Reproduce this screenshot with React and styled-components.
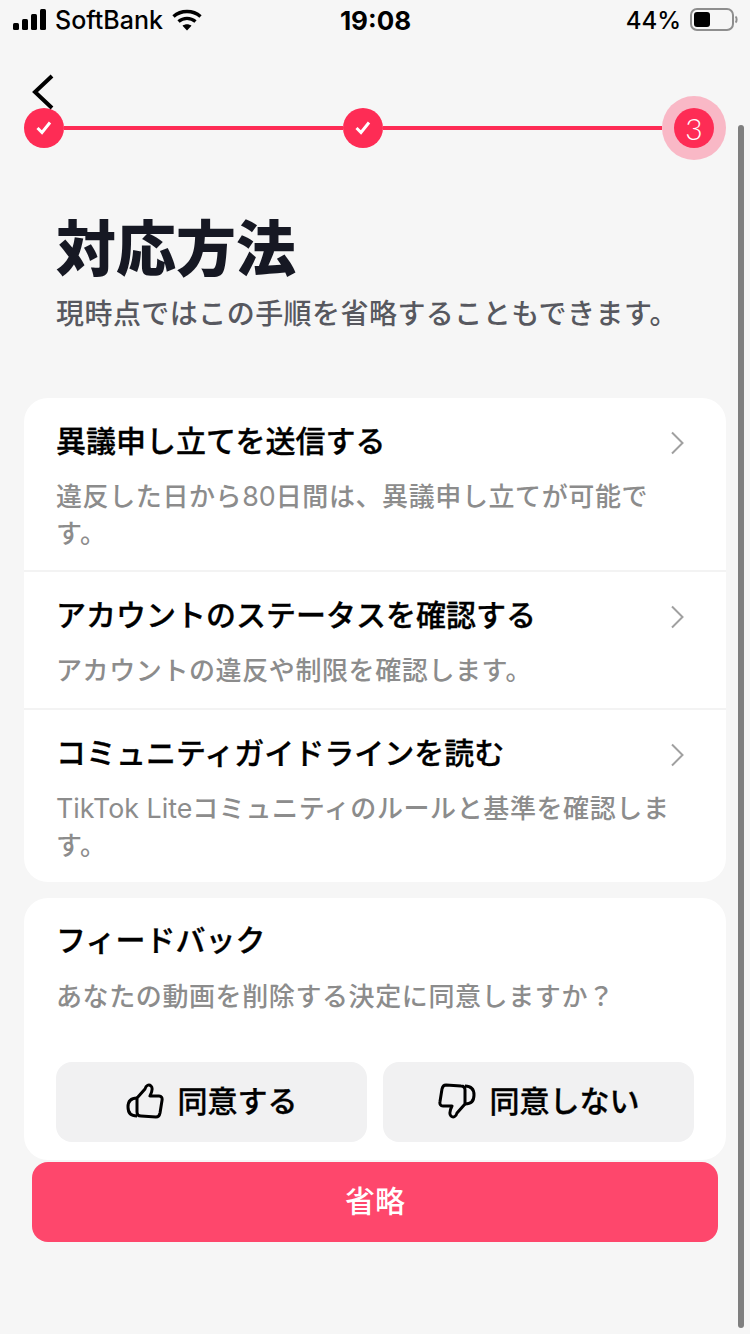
import React from 'react'
import styled, { createGlobalStyle } from 'styled-components'

const GlobalStyle = createGlobalStyle`
  html, body {
    margin: 0;
    padding: 0;
    background: #f6f6f6;
  }
  * {
    box-sizing: border-box;
  }
`

const Page = styled.div`
  position: relative;
  width: 750px;
  height: 1334px;
  overflow: hidden;
  background: #f6f6f6;
  font-family: "Noto Sans CJK JP", "Noto Sans", sans-serif;
  color: #000;
`

const StatusBar = styled.div`
  height: 40px;
  display: grid;
  grid-template-columns: 1fr auto 1fr;
  align-items: center;
  padding: 0 12px 0 13px;
  font-family: Inter, "Liberation Sans", sans-serif;
  font-size: 25px;
  font-weight: 500;
`

const StatusLeft = styled.div`
  display: flex;
  align-items: center;
  gap: 9px;
`

const StatusRight = styled.div`
  display: flex;
  align-items: center;
  justify-content: flex-end;
  gap: 9px;
  font-size: 24px;
`

const Clock = styled.div`
  font-weight: 700;
  font-size: 26px;
`

const BackButton = styled.div`
  position: absolute;
  left: 32px;
  top: 74px;
  line-height: 0;
`

const Stepper = styled.div`
  margin-top: 68px;
  padding: 0 24px;
  height: 40px;
  display: flex;
  align-items: center;
`

const Dot = styled.div`
  width: 40px;
  height: 40px;
  flex: none;
  margin: ${p => (p.$active ? '0 12px' : '0')};
  border-radius: 50%;
  background: #fe2c55;
  color: #fff;
  display: flex;
  align-items: center;
  justify-content: center;
  font-family: Lato, "Noto Sans", sans-serif;
  font-size: 30px;
  font-weight: 300;
  box-shadow: ${p => (p.$active ? '0 0 0 12px #f9b8c6' : 'none')};
`

const Line = styled.div`
  flex: 1;
  height: 4px;
  background: #fe2c55;
`

const Heading = styled.div`
  padding: 62px 33px 0 56px;
`

const Title = styled.h1`
  margin: 0;
  font-size: 60px;
  line-height: 70px;
  font-weight: 900;
  color: #161823;
`

const Subtitle = styled.p`
  margin: 12px 0 0;
  font-size: 28px;
  line-height: 40px;
  font-weight: 500;
  letter-spacing: 0.45px;
  color: #57585f;
`

const Card = styled.div`
  margin: ${p => p.$top}px 24px 0;
  background: #fff;
  border-radius: 24px;
`

const RowTitle = styled.div`
  font-size: 30px;
  line-height: 42px;
  font-weight: 500;
  -webkit-text-stroke: 0.3px #000;
`

const RowText = styled.div`
  margin-top: 17px;
  padding-right: 24px;
  font-size: 26px;
  line-height: 37px;
  letter-spacing: 0.6px;
  color: #8c8c8c;
  font-weight: 500;
`

const Row = styled.div`
  position: relative;
  padding: 20px 32px ${p => p.$bottom}px;
  border-bottom: 2px solid #f3f3f3;
  &:last-child {
    border-bottom-color: transparent;
  }
  ${RowText} {
    margin-top: 16px;
  }
`

const Latin = styled.span`
  font-family: Inter, "Noto Sans", sans-serif;
  font-size: 26.8px;
  line-height: 1;
  letter-spacing: 0;
  font-weight: 400;
`

const Chevron = styled.div`
  position: absolute;
  right: 42px;
  top: 33px;
  line-height: 0;
`

const FeedbackCard = styled(Card)`
  height: 262px;
  padding: 19px 32px 0;
`

const VoteRow = styled.div`
  margin-top: 49px;
  display: grid;
  grid-template-columns: 1fr 1fr;
  gap: 16px;
`

const VoteButton = styled.div`
  height: 80px;
  padding-bottom: 6px;
  border-radius: 16px;
  background: #f1f1f2;
  display: flex;
  align-items: center;
  justify-content: center;
  gap: 14px;
  font-size: 30px;
  font-weight: 500;
  -webkit-text-stroke: 0.3px #000;
  svg {
    margin-top: 4px;
  }
`

const SkipButton = styled.div`
  margin: 2px 32px 0;
  height: 80px;
  padding-bottom: 6px;
  border-radius: 16px;
  background: #fe476c;
  color: #fff;
  display: flex;
  align-items: center;
  justify-content: center;
  font-size: 30px;
  font-weight: 500;
`

const ScrollThumb = styled.div`
  position: absolute;
  right: 6px;
  top: 125px;
  width: 6px;
  height: 1203px;
  border-radius: 3px;
  background: #7f7f7f;
`

const SignalIcon = () => (
  <svg width="33" height="22" viewBox="0 0 33 22">
    <rect x="0" y="14" width="6" height="7" rx="1.5" fill="#000" />
    <rect x="9" y="10" width="6" height="11" rx="1.5" fill="#000" />
    <rect x="18" y="5" width="6" height="16" rx="1.5" fill="#000" />
    <rect x="27" y="0" width="6" height="21" rx="1.5" fill="#000" />
  </svg>
)

const WifiIcon = () => (
  <svg width="30" height="22" viewBox="0 0 30 22" fill="none" stroke="#000" strokeWidth="3.4">
    <path d="M1.5 7.5C9 0.8 21 0.8 28.5 7.5" />
    <path d="M6.5 12.5C11.5 8.3 18.5 8.3 23.5 12.5" />
    <path d="M15 21.5L10.5 16.8C13 14.8 17 14.8 19.5 16.8Z" fill="#000" stroke="none" />
  </svg>
)

const BatteryIcon = () => (
  <svg width="48" height="24" viewBox="0 0 48 24" fill="none">
    <rect x="1" y="1" width="42" height="21" rx="6" stroke="#8e8e8e" strokeWidth="2" />
    <rect x="4" y="4" width="16" height="15" rx="3" fill="#000" />
    <path d="M45.5 8.5C47 9.5 47 13.5 45.5 14.5" stroke="#8e8e8e" strokeWidth="2" />
  </svg>
)

const BackIcon = () => (
  <svg width="24" height="36" viewBox="0 0 24 36" fill="none" stroke="#000" strokeWidth="4">
    <path d="M20 2L3 18L20 34" />
  </svg>
)

const CheckIcon = () => (
  <svg width="18" height="16" viewBox="0 0 18 16" fill="none" stroke="#fff" strokeWidth="3">
    <path d="M2.5 8L7 12.5L15 2.5" />
  </svg>
)

const ChevronIcon = () => (
  <svg width="14" height="24" viewBox="0 0 14 24" fill="none" stroke="#a0a0a0" strokeWidth="2">
    <path d="M2 1.5L12.5 12L2 22.5" />
  </svg>
)

const ThumbIcon = ({ down }) => (
  <svg width="38" height="36" viewBox="0 0 38 36" fill="none" stroke="#000" strokeWidth="3" strokeLinejoin="round"
    style={down ? { transform: 'rotate(180deg)' } : undefined}>
    <path d="M11 15L19 6C20 2 23 1 25 3C27 5 26 9 24 13L33 13C35.5 13 36.5 15 36 17.5L34 30C33.500 32.500 32 34 30 34L15 33C12 33 11 31.500 11 29Z" />
    <path d="M11 15C5 15 2 18 2 24C2 30 5 33 11 33" />
  </svg>
)

const rows = [
  { title: '異議申し立てを送信する', bottom: 20, text: <>違反した日から<Latin>80</Latin>日間は、異議申し立てが可能です。</> },
  { title: 'アカウントのステータスを確認する', bottom: 21, text: 'アカウントの違反や制限を確認します。' },
  { title: 'コミュニティガイドラインを読む', bottom: 18, text: <><Latin>TikTok Lite</Latin>コミュニティのルールと基準を確認します。</> },
]

export default function App() {
  return (
    <Page>
      <GlobalStyle />
      <StatusBar>
        <StatusLeft>
          <SignalIcon />
          <span>SoftBank</span>
          <WifiIcon />
        </StatusLeft>
        <Clock>19:08</Clock>
        <StatusRight>
          <span>44%</span>
          <BatteryIcon />
        </StatusRight>
      </StatusBar>

      <BackButton><BackIcon /></BackButton>

      <Stepper>
        <Dot><CheckIcon /></Dot>
        <Line />
        <Dot><CheckIcon /></Dot>
        <Line />
        <Dot $active>3</Dot>
      </Stepper>

      <Heading>
        <Title>対応方法</Title>
        <Subtitle>現時点ではこの手順を省略することもできます。</Subtitle>
      </Heading>

      <Card $top={66}>
        {rows.map(row => (
          <Row key={row.title} $bottom={row.bottom}>
            <RowTitle>{row.title}</RowTitle>
            <Chevron><ChevronIcon /></Chevron>
            <RowText>{row.text}</RowText>
          </Row>
        ))}
      </Card>

      <FeedbackCard $top={16}>
        <RowTitle>フィードバック</RowTitle>
        <RowText>あなたの動画を削除する決定に同意しますか？</RowText>
        <VoteRow>
          <VoteButton><ThumbIcon />同意する</VoteButton>
          <VoteButton><ThumbIcon down />同意しない</VoteButton>
        </VoteRow>
      </FeedbackCard>

      <SkipButton>省略</SkipButton>
      <ScrollThumb />
    </Page>
  )
}
